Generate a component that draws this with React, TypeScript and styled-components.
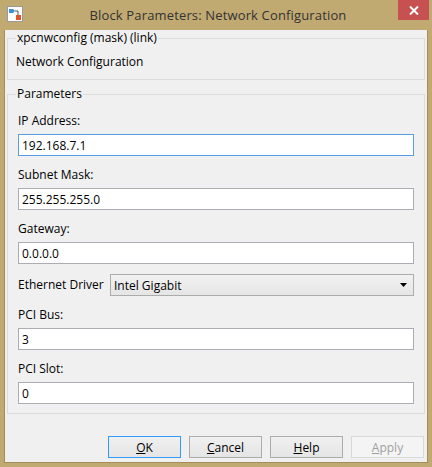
import React from "react";
import styled, { createGlobalStyle } from "styled-components";

const UI_FONT = `"Open Sans", "Noto Sans", "DejaVu Sans", sans-serif`;

const GlobalStyle = createGlobalStyle`
  html, body { margin: 0; padding: 0; background: #c1a972; }
  body { font-family: ${UI_FONT}; }
  * { box-sizing: border-box; }
`;

const Window = styled.div`
  width: 432px;
  height: 467px;
  display: flex;
  flex-direction: column;
  background: #c1a972;
  overflow: hidden;
`;

const TitleBar = styled.div`
  flex: 0 0 30px;
  height: 30px;
  display: grid;
  grid-template-columns: 1fr auto 1fr;
  align-items: start;
  padding: 0 3px 0 7px;
`;

const AppIcon = styled.svg`
  display: block;
  width: 16px;
  height: 16px;
  margin-top: 6px;
`;

const Title = styled.div`
  font-size: 13px;
  letter-spacing: 0.15px;
  line-height: 30px;
  color: #333333;
  white-space: nowrap;
`;

const CloseButton = styled.button`
  justify-self: end;
  width: 31px;
  height: 20px;
  border: none;
  padding: 0;
  background: #c75050;
  display: flex;
  align-items: center;
  justify-content: center;
`;

const Frame = styled.div`
  flex: 1;
  display: flex;
  padding: 0 4px 4px;
`;

const Body = styled.div`
  flex: 1;
  display: flex;
  flex-direction: column;
  background: #f0f0f0;
  border: 1px solid #a48d5b;
  border-top: none;
  padding: 0 2px 4px;
`;

const Group = styled.fieldset<{ $inset: number; $gap: number }>`
  margin: ${(p) => p.$gap}px 0 0;
  min-width: 0;
  border: 1px solid #dcdcdc;
  padding: 0 ${(p) => p.$inset}px 9px;
  display: flex;
  flex-direction: column;
  & > legend {
    margin-left: ${(p) => 8 - p.$inset}px;
  }
`;

const GroupTitle = styled.legend`
  padding: 0 1px;
  font-size: 12px;
  line-height: 16px;
  color: #000;
`;

const Description = styled.div`
  margin-top: 8px;
  font-size: 12px;
  line-height: 16px;
  color: #000;
`;

const FieldLabel = styled.label`
  display: block;
  margin: 11px 0 5px;
  font-size: 12px;
  line-height: 16px;
  color: #000;
`;

const TextBox = styled.input<{ $focused?: boolean }>`
  display: block;
  width: 100%;
  height: 22px;
  margin: 0;
  padding: 0 3px;
  border: 1px solid ${(p) => (p.$focused ? "#569de5" : "#abadb3")};
  background: #ffffff;
  font-family: ${UI_FONT};
  font-size: 12px;
  color: #000;
  outline: none;
`;

const InlineRow = styled.div`
  display: flex;
  align-items: center;
  margin-top: 10px;
`;

const InlineLabel = styled.span`
  flex: 0 0 92px;
  font-size: 12px;
  line-height: 16px;
  color: #000;
  white-space: nowrap;
`;

const Combo = styled.div`
  flex: 1;
  height: 22px;
  display: flex;
  align-items: center;
  justify-content: space-between;
  padding: 0 6px 0 3px;
  border: 1px solid #acacac;
  background: linear-gradient(#f2f2f2, #e5e5e5);
  font-size: 12px;
  color: #000;
`;

const ButtonRow = styled.div`
  margin-top: auto;
  display: flex;
  justify-content: flex-end;
  gap: 8px;
  padding-right: 1px;
`;

const DialogButton = styled.button<{ $default?: boolean }>`
  width: 73px;
  height: 22px;
  padding: 0;
  border: 1px solid ${(p) => (p.$default ? "#3399ff" : p.disabled ? "#d9d9d9" : "#acacac")};
  background: ${(p) => (p.disabled ? "#f4f4f4" : "linear-gradient(#f0f0f0, #e5e5e5)")};
  font-family: ${UI_FONT};
  font-size: 12px;
  color: ${(p) => (p.disabled ? "#a0a0a0" : "#000")};
`;

const fields = [
  { label: "IP Address:", value: "192.168.7.1", focused: true },
  { label: "Subnet Mask:", value: "255.255.255.0" },
  { label: "Gateway:", value: "0.0.0.0" },
];

const pciFields = [
  { label: "PCI Bus:", value: "3" },
  { label: "PCI Slot:", value: "0" },
];

export default function App() {
  return (
    <>
      <GlobalStyle />
      <Window>
        <TitleBar>
          <AppIcon viewBox="0 0 16 16">
            <rect x="0.5" y="0.5" width="15" height="15" fill="#fdfdfd" stroke="#9a9a9a" />
            <path d="M2 3 L6 3 L8 5 L6 7 L2 7 Z" fill="#3d8fd6" />
            <path d="M8 5 L11 5 L11 9" stroke="#555" fill="none" />
            <rect x="9" y="9" width="5" height="5" fill="#e0532b" />
          </AppIcon>
          <Title>Block Parameters: Network Configuration</Title>
          <CloseButton aria-label="Close">
            <svg width="10" height="9" viewBox="0 0 10 9">
              <path d="M1 0.5 L9 8.5 M9 0.5 L1 8.5" stroke="#ffffff" strokeWidth="2" />
            </svg>
          </CloseButton>
        </TitleBar>
        <Frame>
          <Body>
            <Group $inset={8} $gap={0}>
              <GroupTitle>xpcnwconfig (mask) (link)</GroupTitle>
              <Description>Network Configuration</Description>
            </Group>
            <Group $inset={10} $gap={6}>
              <GroupTitle>Parameters</GroupTitle>
              {fields.map((f) => (
                <div key={f.label}>
                  <FieldLabel>{f.label}</FieldLabel>
                  <TextBox defaultValue={f.value} $focused={f.focused} />
                </div>
              ))}
              <InlineRow>
                <InlineLabel>Ethernet Driver</InlineLabel>
                <Combo role="combobox">
                  <span>Intel Gigabit</span>
                  <svg width="7" height="4" viewBox="0 0 7 4">
                    <path d="M0 0 H7 L3.5 4 Z" fill="#000" />
                  </svg>
                </Combo>
              </InlineRow>
              {pciFields.map((f) => (
                <div key={f.label}>
                  <FieldLabel>{f.label}</FieldLabel>
                  <TextBox defaultValue={f.value} />
                </div>
              ))}
            </Group>
            <ButtonRow>
              <DialogButton $default>
                <u>O</u>K
              </DialogButton>
              <DialogButton>
                <u>C</u>ancel
              </DialogButton>
              <DialogButton>
                <u>H</u>elp
              </DialogButton>
              <DialogButton disabled>
                <u>A</u>pply
              </DialogButton>
            </ButtonRow>
          </Body>
        </Frame>
      </Window>
    </>
  );
}
